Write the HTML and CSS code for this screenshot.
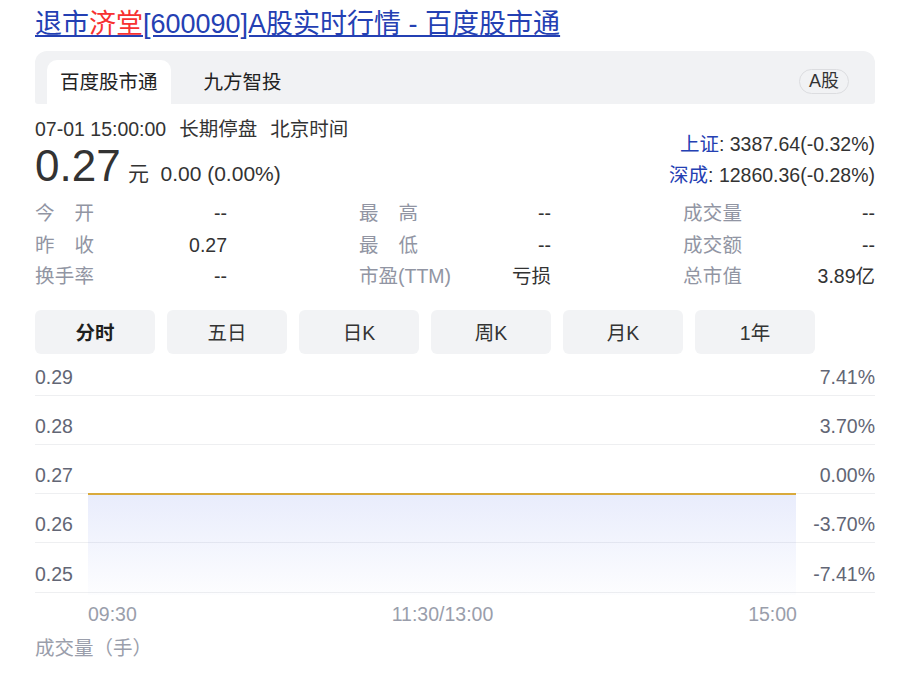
FILE: index.html
```html
<!DOCTYPE html>
<html lang="zh-CN">
<head>
  <meta charset="UTF-8">
  <title>退市济堂[600090]A股实时行情 - 百度股市通</title>
  <link rel="stylesheet" href="styles.css">
</head>
<body>
  <div class="pagina">

    <h1 class="titulo"><a href="#">退市<em>济堂</em>[600090]A股实时行情 - 百度股市通</a></h1>

    <div class="fuentes">
      <div class="fuente activa">百度股市通</div>
      <div class="fuente">九方智投</div>
      <div class="mercado">A股</div>
    </div>

    <div class="cabecera">
      <div class="precio-bloque">
        <div class="fecha">07-01 15:00:00<span>长期停盘</span><span>北京时间</span></div>
        <div class="precio">
          <span class="cifra">0.27</span>
          <span class="unidad">元</span>
          <span class="cambio">0.00 (0.00%)</span>
        </div>
      </div>
      <div class="indices">
        <div><a href="#">上证</a>: 3387.64(-0.32%)</div>
        <div><a href="#">深成</a>: 12860.36(-0.28%)</div>
      </div>
    </div>

    <div class="datos">
      <div class="dato"><span class="etiqueta">今开</span><span class="valor">--</span></div>
      <div class="dato"><span class="etiqueta">最高</span><span class="valor">--</span></div>
      <div class="dato"><span class="etiqueta">成交量</span><span class="valor">--</span></div>
      <div class="dato"><span class="etiqueta">昨收</span><span class="valor">0.27</span></div>
      <div class="dato"><span class="etiqueta">最低</span><span class="valor">--</span></div>
      <div class="dato"><span class="etiqueta">成交额</span><span class="valor">--</span></div>
      <div class="dato"><span class="etiqueta">换手率</span><span class="valor">--</span></div>
      <div class="dato"><span class="etiqueta ancho">市盈(TTM)</span><span class="valor">亏损</span></div>
      <div class="dato"><span class="etiqueta">总市值</span><span class="valor">3.89亿</span></div>
    </div>

    <div class="periodos">
      <button class="periodo activo">分时</button>
      <button class="periodo">五日</button>
      <button class="periodo">日K</button>
      <button class="periodo">周K</button>
      <button class="periodo">月K</button>
      <button class="periodo">1年</button>
    </div>

    <div class="grafico">
      <div class="fila"><span>0.29</span><span>7.41%</span></div>
      <div class="fila"><span>0.28</span><span>3.70%</span></div>
      <div class="fila"><span>0.27</span><span>0.00%</span></div>
      <div class="fila"><span>0.26</span><span>-3.70%</span></div>
      <div class="fila"><span>0.25</span><span>-7.41%</span></div>
      <div class="area"></div>
    </div>

    <div class="horas">
      <span>09:30</span>
      <span>11:30/13:00</span>
      <span>15:00</span>
    </div>

    <div class="volumen">成交量（手）</div>

  </div>
</body>
</html>
```

FILE: styles.css
```css
body {
  margin: 0;
  background: #ffffff;
  color: #333333;
  font-family: 'Liberation Sans', Arial, 'Noto Sans CJK SC', sans-serif;
  font-size: 19.5px;
}

.pagina {
  width: 840px;
  padding: 7px 0 0 35px;
}

.titulo {
  margin: 0;
  font-size: 27px;
  font-weight: normal;
  line-height: 34px;
}

.titulo a {
  color: #2440b3;
  text-decoration: underline;
}

.titulo em {
  font-style: normal;
  color: #f73131;
}

.fuentes {
  display: flex;
  align-items: flex-end;
  height: 53px;
  margin-top: 10px;
  padding: 0 26px 0 12px;
  background: #f1f2f4;
  border-radius: 12px 12px 3px 3px;
}

.fuente {
  height: 44px;
  line-height: 44px;
  padding: 0 13px;
  color: #222222;
}

.fuente + .fuente {
  margin-left: 20px;
}

.fuente.activa {
  background: #ffffff;
  border-radius: 10px 10px 0 0;
}

.mercado {
  margin-left: auto;
  margin-bottom: 10px;
  height: 23px;
  line-height: 23px;
  padding: 0 9px;
  font-size: 18px;
  border: 1px solid #dcdde0;
  border-radius: 13px;
}

.cabecera {
  display: flex;
  justify-content: space-between;
  padding-top: 12px;
}

.fecha {
  line-height: 26px;
}

.fecha span {
  margin-left: 13px;
}

.precio {
  height: 48px;
  line-height: 48px;
}

.cifra {
  font-size: 44px;
}

.unidad {
  font-size: 21px;
  margin-left: 2px;
}

.cambio {
  font-size: 21px;
  margin-left: 6px;
}

.indices {
  margin-top: 13px;
  text-align: right;
  line-height: 31px;
}

.indices a {
  color: #2440b3;
  text-decoration: none;
}

.datos {
  display: grid;
  grid-template-columns: repeat(3, 1fr);
  column-gap: 132px;
  margin-top: 7px;
  line-height: 31.5px;
}

.dato {
  display: flex;
}

.etiqueta {
  width: 59px;
  color: #9195a3;
  text-align: justify;
  text-align-last: justify;
  white-space: nowrap;
}

.etiqueta.ancho {
  text-align-last: left;
}

.valor {
  margin-left: auto;
}

.periodos {
  display: flex;
  gap: 12px;
  margin-top: 17px;
}

.periodo {
  width: 120px;
  height: 44px;
  padding: 0;
  border: none;
  border-radius: 6px;
  background: #f2f3f5;
  color: #333333;
  font-family: inherit;
  font-size: 19.5px;
}

.periodo.activo {
  font-weight: bold;
  color: #1f1f1f;
}

.grafico {
  position: relative;
}

.fila {
  display: flex;
  justify-content: space-between;
  align-items: flex-end;
  box-sizing: border-box;
  height: 49.3px;
  padding-bottom: 7px;
  line-height: 22px;
  color: #626675;
  border-bottom: 1.5px solid #eeeff1;
}

.fila:first-child {
  height: 42px;
}

.area {
  position: absolute;
  left: 53px;
  top: 139px;
  width: 708px;
  height: 100px;
  border-top: 2px solid #d9aa3c;
  background: linear-gradient(rgba(72, 103, 230, 0.12), rgba(72, 103, 230, 0.01));
}

.horas {
  display: flex;
  justify-content: space-between;
  margin: 10px 78px 0 53px;
  line-height: 22px;
  color: #9a9eab;
}

.volumen {
  margin-top: 12px;
  line-height: 22px;
  color: #9a9eab;
}
```
